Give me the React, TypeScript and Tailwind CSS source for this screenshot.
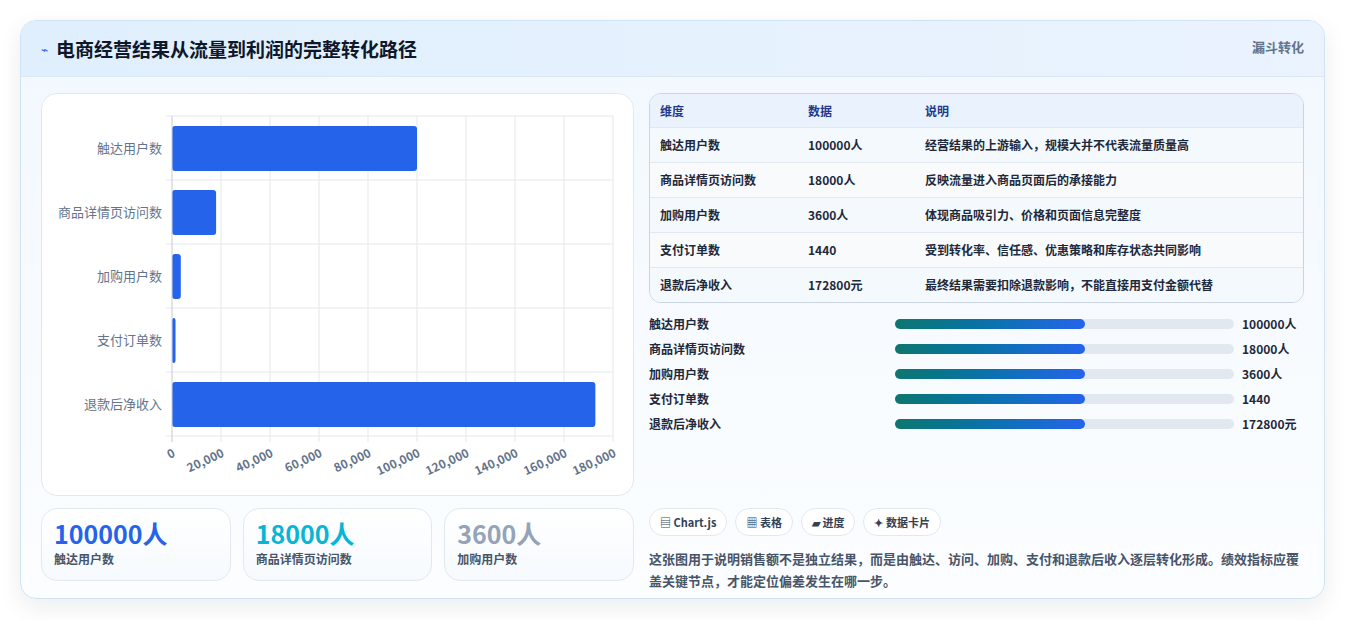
const font = { fontFamily: '"Noto Sans CJK SC", "Noto Sans", sans-serif' };

const rows = [
  { name: '触达用户数', value: 100000, show: '100000人', note: '经营结果的上游输入，规模大并不代表流量质量高' },
  { name: '商品详情页访问数', value: 18000, show: '18000人', note: '反映流量进入商品页面后的承接能力' },
  { name: '加购用户数', value: 3600, show: '3600人', note: '体现商品吸引力、价格和页面信息完整度' },
  { name: '支付订单数', value: 1440, show: '1440', note: '受到转化率、信任感、优惠策略和库存状态共同影响' },
  { name: '退款后净收入', value: 172800, show: '172800元', note: '最终结果需要扣除退款影响，不能直接用支付金额代替' },
];

function BarChart() {
  const x0 = 130, y0 = 22, w = 441, h = 320, max = 180000;
  const ticks = [0, 20000, 40000, 60000, 80000, 100000, 120000, 140000, 160000, 180000];
  return (
    <svg width="593" height="402" style={font}>
      {ticks.map((t) => {
        const x = x0 + (t / max) * w;
        return (
          <g key={t}>
            <line x1={x} y1={y0} x2={x} y2={y0 + h + 6} stroke="#e5e7eb" />
            <text x={x + 4} y={y0 + h + 20} fontSize="12" fontWeight="600" fill="#64748b" textAnchor="end" transform={`rotate(-25 ${x + 4} ${y0 + h + 20})`}>
              {t.toLocaleString('en-US')}
            </text>
          </g>
        );
      })}
      {rows.map((r, i) => {
        const y = y0 + i * 64;
        return (
          <g key={r.name}>
            <line x1={x0 - 6} y1={y} x2={x0 + w} y2={y} stroke="#e5e7eb" />
            <rect x={x0} y={y + 10} width={Math.max((r.value / max) * w, 3)} height={45} rx="3" fill="#2563eb" />
            <text x={x0 - 10} y={y + 37} fontSize="13" fill="#64748b" textAnchor="end">{r.name}</text>
          </g>
        );
      })}
      <line x1={x0 - 6} y1={y0 + h} x2={x0 + w} y2={y0 + h} stroke="#e5e7eb" />
      <line x1={x0} y1={y0} x2={x0} y2={y0 + h + 6} stroke="#d1d5db" />
    </svg>
  );
}

export default function App() {
  const stats = [
    { v: '100000人', l: '触达用户数', c: 'text-[#2563eb]' },
    { v: '18000人', l: '商品详情页访问数', c: 'text-[#06b6d4]' },
    { v: '3600人', l: '加购用户数', c: 'text-[#94a3b8]' },
  ];
  const chips = ['▤ Chart.js', '▦ 表格', '▰ 进度', '✦ 数据卡片'];
  return (
    <div className="w-[1345px] h-[620px] bg-white pt-5 px-5" style={font}>
      <div className="rounded-2xl border border-[#cfe3f3] bg-gradient-to-b from-[#f2f8fe] to-[#fbfdff] shadow-[0_8px_24px_rgba(15,23,42,0.08)] overflow-hidden h-[579px]">
        {/* header */}
        <div className="h-14 flex justify-between items-start px-5 bg-gradient-to-r from-[#e0effd] to-[#eaf3fe] border-b border-[#d9e8f6]">
          <div className="flex items-center gap-2 h-14">
            <span className="text-[#2563eb] text-xs">⌁</span>
            <h1 className="text-[19px] font-bold text-[#0f172a]">电商经营结果从流量到利润的完整转化路径</h1>
          </div>
          <span className="mt-4 text-[13px] font-semibold text-[#64748b]">漏斗转化</span>
        </div>
        <div className="flex gap-[15px] px-5 pt-4">
          {/* left */}
          <div className="w-[593px] flex flex-col gap-3">
            <div className="h-[403px] bg-white rounded-2xl border border-[#e2e8f0]">
              <BarChart />
            </div>
            <div className="grid grid-cols-3 gap-3">
              {stats.map((s) => (
                <div key={s.l} className="h-[73px] rounded-2xl border border-[#e2e8f0] bg-gradient-to-b from-white to-[#f6fafe] px-3 pt-2">
                  <div className={`text-[25px] font-bold leading-8 ${s.c}`}>{s.v}</div>
                  <div className="text-xs font-semibold text-[#475569] mt-0.5">{s.l}</div>
                </div>
              ))}
            </div>
          </div>
          {/* right */}
          <div className="w-[657px] flex flex-col">
            <div className="rounded-xl border border-[#cbd5e1] overflow-hidden text-xs font-semibold text-[#1e293b]">
              <div className="flex h-[33px] items-center bg-[#eaf3fd] text-[#1e3a8a]">
                <div className="w-[158px] pl-2.5">维度</div>
                <div className="w-[117px]">数据</div>
                <div>说明</div>
              </div>
              {rows.map((r, i) => (
                <div key={r.name} className={`flex h-[35px] items-center border-t border-[#e2e8f0] ${i % 2 ? 'bg-[#f8fafc]' : 'bg-[#f4f9fe]'}`}>
                  <div className="w-[158px] pl-2.5">{r.name}</div>
                  <div className="w-[117px]">{r.show}</div>
                  <div>{r.note}</div>
                </div>
              ))}
            </div>
            <div className="mt-3 flex flex-col gap-[7px]">
              {rows.map((r) => (
                <div key={r.name} className="flex items-center h-[18px] text-xs font-semibold text-[#1e293b]">
                  <div className="w-[246px]">{r.name}</div>
                  <div className="w-[339px] h-2.5 rounded-full bg-[#e2e8f0]">
                    <div className="w-[190px] h-2.5 rounded-full bg-gradient-to-r from-[#0f766e] to-[#2563eb]" />
                  </div>
                  <div className="ml-2">{r.show}</div>
                </div>
              ))}
            </div>
            <div className="mt-[75px] flex gap-2">
              {chips.map((c) => (
                <span key={c} className="h-7 px-2.5 flex items-center rounded-full border border-[#e2e8f0] bg-white text-[11px] font-semibold text-[#334155]">{c}</span>
              ))}
            </div>
            <p className="mt-3 text-[13px] font-semibold leading-[22px] text-[#475569]">
              这张图用于说明销售额不是独立结果，而是由触达、访问、加购、支付和退款后收入逐层转化形成。绩效指标应覆盖关键节点，才能定位偏差发生在哪一步。
            </p>
          </div>
        </div>
      </div>
    </div>
  );
}
